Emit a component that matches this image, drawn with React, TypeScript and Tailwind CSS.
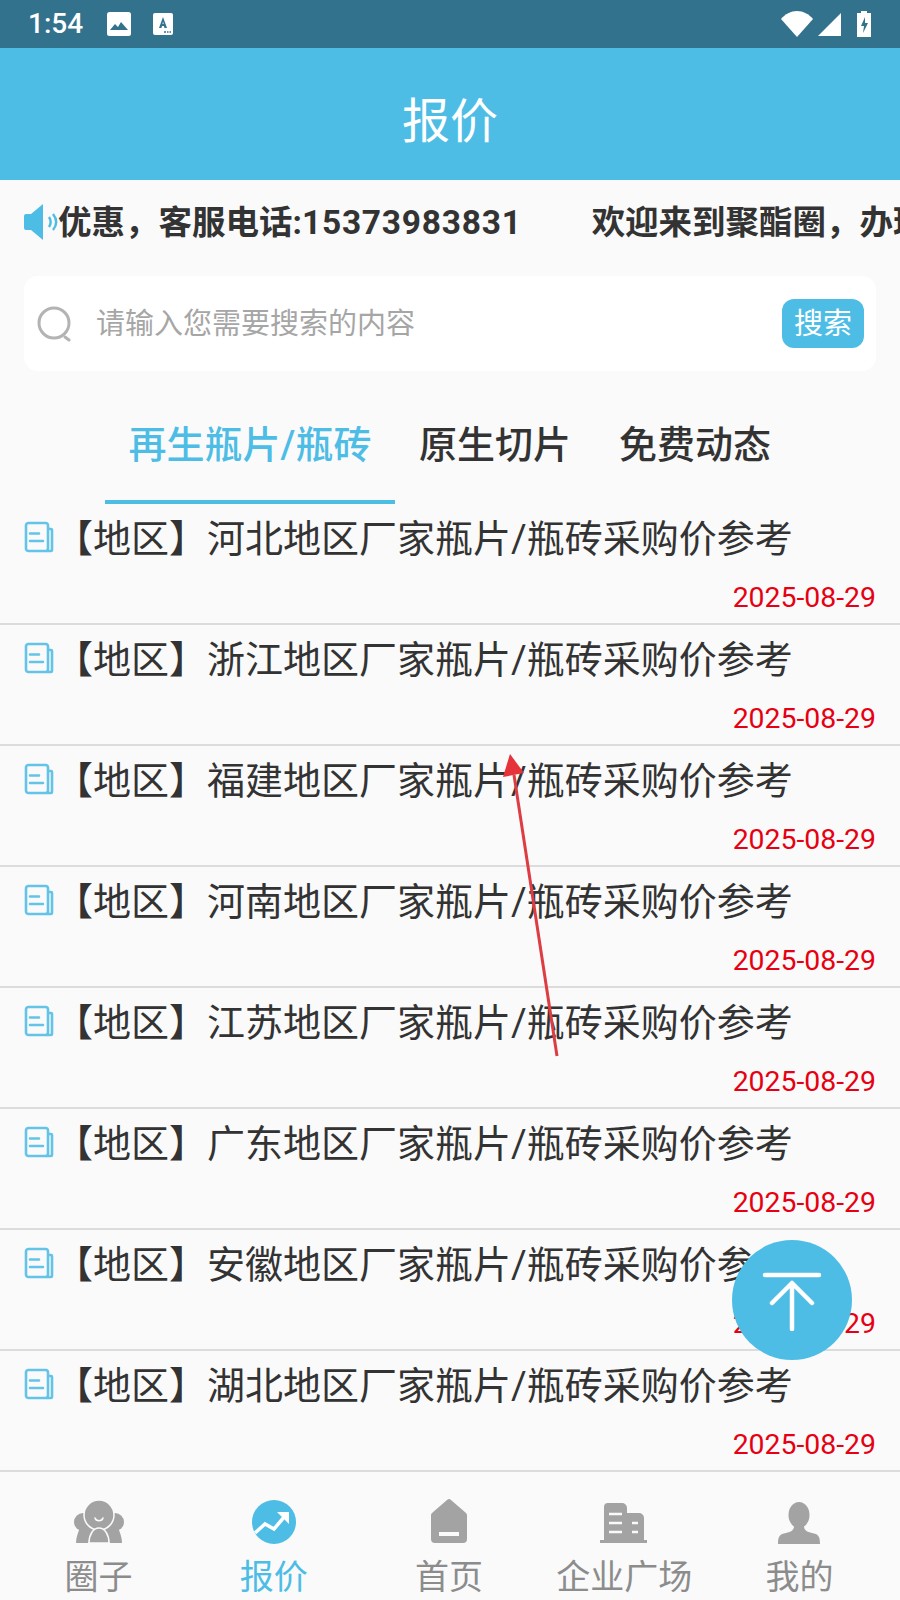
const FONT = "font-['Roboto','Noto_Sans_CJK_SC',sans-serif]";

const regions = ["河北", "浙江", "福建", "河南", "江苏", "广东", "安徽", "湖北"];

function DocIcon() {
  return (
    <svg width="30" height="32" viewBox="0 0 30 32" fill="none" stroke="#63c4e8" strokeWidth="2.600" className="shrink-0 -mt-[5px]">
      <rect x="2" y="2" width="22" height="28" rx="2.500" />
      <path d="M24 8h3a1 1 0 0 1 1 1V29a1 1 0 0 1-1 1H22" />
      <path d="M6 12.500h9M6 20h13" strokeLinecap="round" />
    </svg>
  );
}

function NavIcon({ name }: { name: string }) {
  if (name === "quan") {
    return (
      <svg width="52" height="44" viewBox="0 0 52 44" fill="#a3a3a3">
        <circle cx="10" cy="22" r="9" />
        <circle cx="42" cy="22" r="9" />
        <path d="M7 28h12l3 2-7 13H3c0-5 2-11 4-15z" />
        <path d="M45 28H33l-3 2 7 13h12c0-5-2-11-4-15z" />
        <circle cx="26" cy="15" r="15" stroke="#fafafa" strokeWidth="1.500" />
        <path d="M16 43c0-8 4-15 10-15s10 7 10 15z" stroke="#fafafa" strokeWidth="1.500" />
        <path d="M22 18c1 3.500 7 3.500 8 0" fill="none" stroke="#fafafa" strokeWidth="1.500" strokeLinecap="round" />
      </svg>
    );
  }
  if (name === "price") {
    return (
      <svg width="44" height="44" viewBox="0 0 44 44">
        <circle cx="22" cy="22" r="22" fill="#4dbde6" />
        <path d="M3 33l10-9 9 5 11-13" fill="none" stroke="#fff" strokeWidth="3.500" />
        <path d="M25 12h12v12z" fill="#fff" />
      </svg>
    );
  }
  if (name === "home") {
    return (
      <svg width="40" height="46" viewBox="0 0 40 46" fill="#a3a3a3">
        <path d="M3 15L18 2a3 3 0 0 1 4 0l15 13a3 3 0 0 1 1 2.500V41a4 4 0 0 1-4 4H6a4 4 0 0 1-4-4V17.500A3 3 0 0 1 3 15z" />
        <rect x="10" y="34" width="20" height="4" fill="#fafafa" />
      </svg>
    );
  }
  if (name === "biz") {
    return (
      <svg width="48" height="42" viewBox="0 0 48 42" fill="#a3a3a3">
        <path d="M4 5a4 4 0 0 1 4-4h14a5 5 0 0 1 5 5v5h12a5 5 0 0 1 5 5v22h3v3H0v-3h4z" />
        <path d="M9 12h13M9 21h13M9 30h13M32 21h6M32 30h6" stroke="#fafafa" strokeWidth="2.500" />
      </svg>
    );
  }
  return (
    <svg width="42" height="42" viewBox="0 0 42 42" fill="#a3a3a3">
      <ellipse cx="21" cy="13" rx="10.500" ry="13" />
      <path d="M0 42c0-8 2-10 8-11 5-1 8-3 8-7h10c0 4 3 6 8 7 6 1 8 3 8 11z" />
    </svg>
  );
}

function ListRow({ region }: { region: string }) {
  return (
    <div className="h-[121px] border-b-2 border-[#dcdcdc] pl-6 pr-6 pt-[8px]">
      <div className="flex items-center">
        <DocIcon />
        <div className="ml-[1px] text-[38px] leading-[54px] text-[#333] whitespace-nowrap">
          【地区】{region}地区厂家瓶片/瓶砖采购价参考
        </div>
      </div>
      <div className="mt-[14px] text-right text-[28.400px] leading-[36px] text-[#e60012]">2025-08-29</div>
    </div>
  );
}

export default function App() {
  return (
    <div className={`${FONT} relative h-[1600px] w-[900px] overflow-hidden bg-[#fafafa] flex flex-col`}>
      {/* status bar */}
      <div className="h-[48px] shrink-0 bg-[#33728d] flex items-center pl-[28px] pr-[29px] text-white">
        <span className="text-[28px] font-medium leading-none">1:54</span>
        <svg width="24" height="24" viewBox="0 0 24 24" className="ml-[24px]">
          <rect width="24" height="24" rx="2.500" fill="#fff" />
          <path d="M3 18l5-6 3 3 3-5 7 8z" fill="#33728d" />
        </svg>
        <svg width="20" height="22" viewBox="0 0 20 22" className="ml-[22px]">
          <rect width="20" height="22" rx="2" fill="#fff" />
          <path d="M6 15L10 4l4 11h-2.500l-.6-2H9l-.6 2zM9.500 11h1.200L10 8.500z" fill="#33728d" />
          <path d="M11 19h2M14 19h1.500M16.500 19H18" stroke="#33728d" strokeWidth="1.500" />
        </svg>
        <div className="ml-auto flex items-center">
          <svg width="32" height="26" viewBox="0 0 32 26">
            <path d="M0 8C4 3 10 0 16 0s12 3 16 8L16 26z" fill="#fff" />
          </svg>
          <svg width="23" height="23" viewBox="0 0 23 23" className="ml-[5px]">
            <path d="M0 23L23 0v23z" fill="#fff" />
          </svg>
          <svg width="14" height="26" viewBox="0 0 14 26" className="ml-[16px]">
            <path d="M4 0h6v2h4v24H0V2h4z" fill="#fff" />
            <path d="M8 6L4 15h3l-1 7 5-10H8z" fill="#33728d" />
          </svg>
        </div>
      </div>

      {/* title */}
      <div className="h-[132px] shrink-0 bg-[#4dbde6] flex items-center justify-center pt-[16px] text-[48px] leading-none text-white">报价</div>

      {/* notice */}
      <div className="h-[84px] shrink-0 pl-6 flex items-center overflow-hidden">
        <svg width="36" height="38" viewBox="0 0 36 38" className="shrink-0 -mr-[2px]">
          <path d="M2 11h5L19 1c0 0 0 36 0 36L7 27H2a2 2 0 0 1-2-2V13a2 2 0 0 1 2-2z" fill="#4dbde6" />
          <path d="M25 14c2 3 2 7 0 10M29 11c4 5 4 11 0 16" fill="none" stroke="#4dbde6" strokeWidth="2.400" />
        </svg>
        <div className="mt-[2px] text-[33.500px] font-bold leading-none text-[#333] whitespace-nowrap">
          优惠，客服电话:<span className="tracking-[0.75px]">15373983831</span>
          <span className="ml-[70px]">欢迎来到聚酯圈，办理</span>
        </div>
      </div>

      {/* search */}
      <div className="mx-6 mt-[12px] h-[95px] shrink-0 rounded-[14px] bg-white flex items-center pl-[13px] pr-[12px]">
        <svg width="36" height="36" viewBox="0 0 36 36" fill="none" stroke="#b3b3b3" strokeWidth="3" className="shrink-0">
          <circle cx="17" cy="17" r="15" />
          <path d="M28 31l4 3" strokeLinecap="round" />
        </svg>
        <span className="ml-[23px] mt-[2px] text-[29px] text-[#a6a6a6]">请输入您需要搜索的内容</span>
        <div className="ml-auto h-[49px] w-[82px] rounded-[12px] bg-[#4dbde6] flex items-center justify-center pt-[2px] text-[29px] text-white">搜索</div>
      </div>

      {/* tabs */}
      <div className="mt-[33px] h-[100px] shrink-0 flex items-start pl-[105px] text-[38px] font-medium leading-[82px]">
        <div className="h-[100px] w-[290px] border-b-4 border-[#4dbde6] text-center text-[#4dbde6]">再生瓶片/瓶砖</div>
        <div className="ml-[24px] text-[#333]">原生切片</div>
        <div className="ml-[48px] text-[#333]">免费动态</div>
      </div>

      {/* list */}
      <div className="flex-1 overflow-hidden">
        {regions.map((r) => (
          <ListRow key={r} region={r} />
        ))}
      </div>

      {/* tab bar */}
      <div className="h-[128px] shrink-0 flex pl-[11px] pr-[13px]">
        {[
          ["quan", "圈子"],
          ["price", "报价"],
          ["home", "首页"],
          ["biz", "企业广场"],
          ["me", "我的"],
        ].map(([icon, label]) => (
          <div key={icon} className="flex-1 flex flex-col items-center pt-[26px]">
            <div className="h-[46px] flex items-end">
              <NavIcon name={icon} />
            </div>
            <span className={`mt-[13px] text-[34px] leading-[40px] ${icon === "price" ? "text-[#4dbde6]" : "text-[#8c8c8c]"}`}>{label}</span>
          </div>
        ))}
      </div>

      {/* back to top */}
      <div className="absolute left-[732px] top-[1240px] h-[120px] w-[120px] rounded-full bg-[#4dbde6] flex items-center justify-center">
        <svg width="60" height="62" viewBox="0 0 60 62" fill="none" stroke="#fff" strokeWidth="4.500" strokeLinecap="round" strokeLinejoin="round">
          <path d="M3 6h54M30 14v46M10 34l20-20 20 20" />
        </svg>
      </div>

      {/* red arrow drawn over the shot */}
      <svg className="absolute left-[490px] top-[745px]" width="80" height="320" viewBox="0 0 80 320" fill="none">
        <path d="M67 311L24 30" stroke="#dc3c42" strokeWidth="3" />
        <path d="M20 9L13 32l21-4z" fill="#e5323b" />
      </svg>
    </div>
  );
}
